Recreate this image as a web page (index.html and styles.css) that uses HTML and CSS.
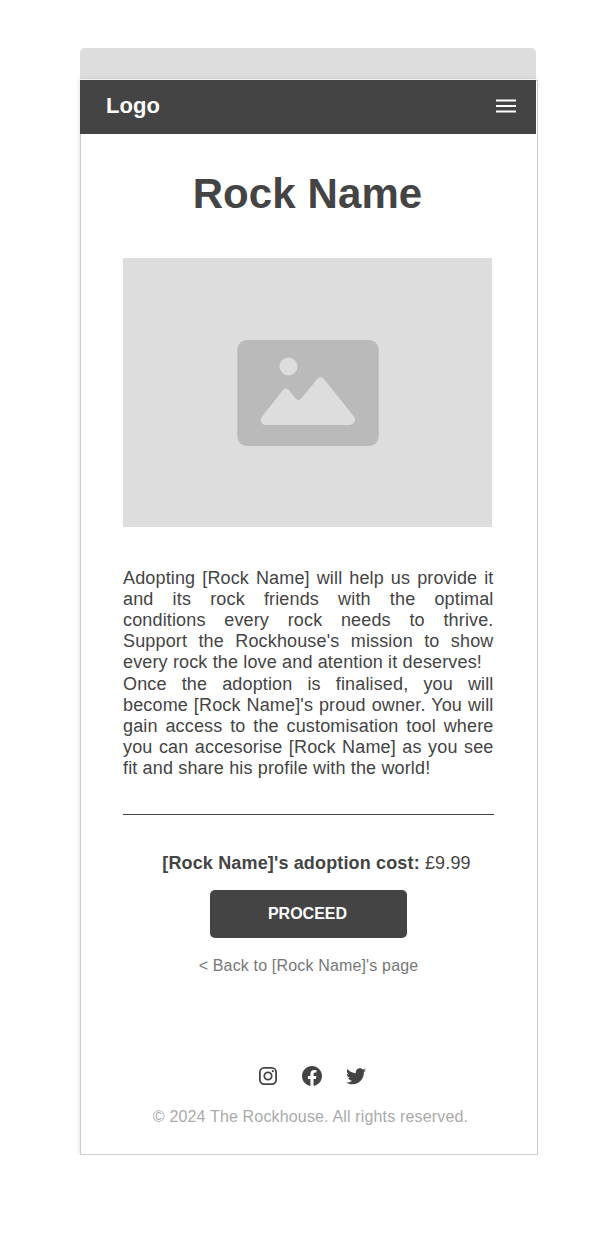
FILE: index.html
```html
<!DOCTYPE html>
<html lang="en">
<head>
<meta charset="utf-8">
<title>Rock Name</title>
<link rel="stylesheet" href="styles.css">
</head>
<body>
<div class="device">
  <div class="chrome"></div>
  <div class="frame">
    <header class="header">
      <span class="logo">Logo</span>
      <svg class="menu" viewBox="0 0 20 16"><path d="M0 1.400h20v2.200H0zM0 6.900h20v2.200H0zM0 12.400h20v2.200H0z"/></svg>
    </header>
    <main class="content">
      <h1 class="title">Rock Name</h1>
      <div class="picture">
        <svg class="placeholder" viewBox="0 0 142 106">
          <rect class="plate" x=".3" width="141.400" height="106" rx="9.500"/>
          <circle class="shape" cx="51.500" cy="26.500" r="9"/>
          <path class="shape" d="M25 76.500L45.600 50.500Q48.700 46.600 51.800 50L58.500 58.300Q61.400 61.600 64.300 58.300L80.300 39Q83.600 35.300 86.900 39L117 76.500Q119 79.500 117.500 82.300Q116 85 113 85H29Q25.500 85 24.200 82.200Q22.800 79.300 25 76.500Z"/>
        </svg>
      </div>
      <div class="description">
        <p>Adopting [Rock Name] will help us provide it and its rock friends with the optimal conditions every rock needs to thrive. Support&nbsp;the Rockhouse's mission to show every rock the love and atention it deserves!</p>
        <p>Once the adoption is finalised, you will become [Rock Name]'s proud owner. You will gain access to the customisation tool where you can accesorise [Rock Name] as you see fit and share his profile with the world!</p>
      </div>
      <p class="cost"><strong>[Rock Name]'s adoption cost:</strong> £9.99</p>
      <button class="proceed">PROCEED</button>
      <a class="back">&lt; Back to [Rock Name]'s page</a>
    </main>
    <footer class="footer">
      <div class="social">
        <svg class="icon" viewBox="0 0 24 24"><rect class="line" x="3.900" y="3.900" width="16.200" height="16.200" rx="4.300"/><circle class="line" cx="12" cy="12" r="3.700"/><circle cx="16.800" cy="7.200" r="1.080"/></svg>
        <svg class="icon" viewBox="0 0 24 24"><path d="M12 2.040C6.500 2.040 2 6.530 2 12.060C2 17.060 5.660 21.210 10.440 21.960V14.960H7.900V12.060H10.440V9.850C10.440 7.340 11.930 5.960 14.220 5.960C15.310 5.960 16.450 6.150 16.450 6.150V8.620H15.190C13.950 8.620 13.560 9.390 13.560 10.160V12.060H16.340L15.890 14.960H13.560V21.960C18.340 21.210 22 17.060 22 12.060C22 6.530 17.500 2.040 12 2.040Z"/></svg>
        <svg class="icon" viewBox="0 0.500 24 24"><path transform="translate(.6 .9) scale(.95)" d="M22.460 6C21.690 6.350 20.860 6.580 20 6.690C20.880 6.160 21.560 5.320 21.880 4.310C21.050 4.810 20.130 5.160 19.160 5.360C18.370 4.500 17.260 4 16 4C13.650 4 11.730 5.920 11.730 8.290C11.730 8.630 11.770 8.960 11.840 9.270C8.280 9.090 5.110 7.380 3 4.790C2.630 5.420 2.420 6.160 2.420 6.940C2.420 8.430 3.170 9.750 4.330 10.500C3.620 10.500 2.960 10.300 2.380 10V10.030C2.380 12.110 3.860 13.850 5.820 14.240C5.190 14.410 4.530 14.440 3.890 14.310C4.430 16 6 17.260 7.890 17.290C6.430 18.450 4.580 19.130 2.560 19.130C2.220 19.130 1.880 19.110 1.540 19.070C3.440 20.290 5.700 21 8.120 21C16 21 20.330 14.460 20.330 8.790C20.330 8.600 20.330 8.420 20.320 8.230C21.160 7.630 21.880 6.870 22.460 6Z"/></svg>
      </div>
      <p class="copyright">© 2024 The Rockhouse. All rights reserved.</p>
    </footer>
  </div>
</div>
</body>
</html>
```
FILE: styles.css
```css
* { box-sizing: border-box; }
body {
  margin: 0;
  background: #fff;
  color: #444;
  font-family: "Liberation Sans", Arial, sans-serif;
}
h1, p { margin: 0; }
.device { width: 458px; margin: 48px 0 0 80px; }
.chrome {
  width: 456px;
  height: 31px;
  margin-bottom: 1px;
  background: #ddd;
  border-radius: 5px 5px 0 0;
}
.frame {
  height: 1075px;
  border: 1px solid #ccc;
  background: #fff;
  box-shadow: -1px -1px 4px rgba(0, 0, 0, .1);
}
.header {
  display: flex;
  align-items: center;
  justify-content: space-between;
  width: 456px;
  height: 54px;
  margin: -1px 0 0 -1px;
  padding: 0 20px 0 26px;
  background: #444;
  color: #fff;
}
.logo {
  padding-bottom: 2px;
  font-size: 22px;
  line-height: 26px;
  font-weight: 700;
  letter-spacing: .1px;
}
.menu { width: 20px; height: 16px; margin-bottom: 2px; fill: #fff; }
.content {
  display: flex;
  flex-direction: column;
  align-items: center;
  padding: 36px 43px 0 42px;
}
.title {
  margin-right: 2px;
  font-size: 42px;
  line-height: 48px;
  letter-spacing: .1px;
}
.picture {
  display: flex;
  align-items: center;
  justify-content: center;
  align-self: flex-start;
  width: 369px;
  height: 269px;
  margin-top: 40px;
  background: #ddd;
}
.placeholder { width: 142px; height: 106px; }
.plate { fill: #bababa; }
.shape { fill: #ddd; }
.description {
  width: 371px;
  padding: 41px .5px 35px 0;
  border-bottom: 1px solid #444;
  font-size: 18px;
  line-height: 21px;
  letter-spacing: .15px;
  text-align: justify;
}
.description p + p { margin-top: 1px; }
.cost {
  margin: 38px 0 0 16px;
  font-size: 18px;
  line-height: 21px;
  letter-spacing: .15px;
  white-space: nowrap;
}
.proceed {
  width: 197px;
  height: 48px;
  margin-top: 16px;
  padding: 0 2px 0 0;
  border: 0;
  border-radius: 5px;
  background: #444;
  color: #fff;
  font: 700 16px/18px "Liberation Sans", Arial, sans-serif;
}
.back {
  margin-top: 18px;
  color: #777;
  font-size: 16px;
  line-height: 19px;
  letter-spacing: .16px;
}
.footer {
  display: flex;
  flex-direction: column;
  align-items: center;
  padding: 89px 0 0 3px;
}
.social { display: flex; gap: 20px; margin-left: 2px; }
.icon { width: 24px; height: 24px; fill: #444; }
.line { fill: none; stroke: #444; stroke-width: 1.800px; }
.copyright {
  margin-top: 19px;
  color: #aaa;
  font-size: 16px;
  line-height: 19px;
  letter-spacing: .16px;
}
```
